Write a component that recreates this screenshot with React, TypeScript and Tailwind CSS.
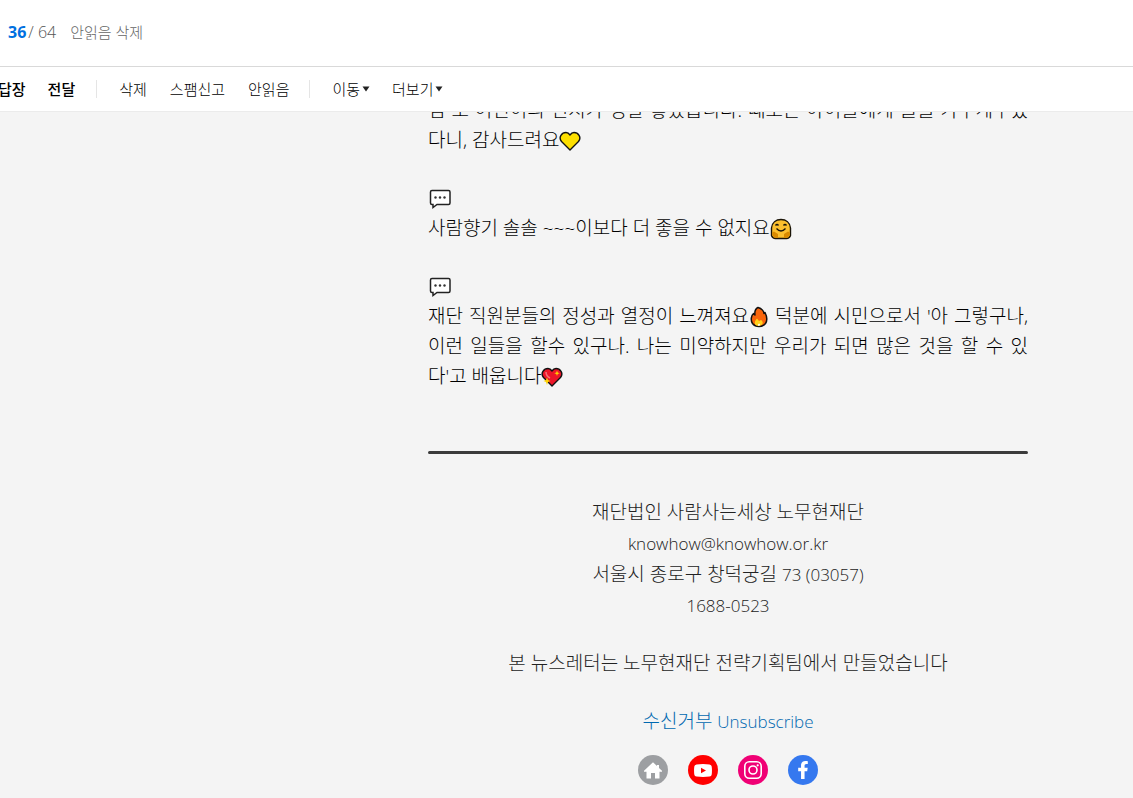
import { FaFacebookF } from "react-icons/fa";
import type { ReactNode } from "react";

function YellowHeart() {
  return (
    <svg viewBox="0 0 22 22" className="inline-block size-[22px] align-[-5px]" role="img" aria-label="노란 하트">
      <path d="M11 20 2.5 11.5C-1 7 3 2.5 7 2.500c2 0 3 1 4 2.500 1-1.500 2-2.500 4-2.500 4 0 8 4.500 4.500 9z" fill="#fddf00" stroke="#111" strokeWidth="1.400" strokeLinejoin="round" />
    </svg>
  );
}

function HugFace() {
  return (
    <svg viewBox="0 0 22 22" className="inline-block size-[22px] align-[-5px]" role="img" aria-label="포옹">
      <path d="M1.500 17.500V10C2 4.500 6 1.500 11 1.500s9 3 9.500 8.500v7.500q-1 3-4 3h-11q-3 0-4-3z" fill="#fcbf2d" stroke="#1a1408" strokeWidth="1.400" />
      <path d="M2.200 14.500 4 13.500l4 2.500v4H5l-2.800-2.500zM19.800 14.500 18 13.500 14 16v4h3l2.800-2.500z" fill="#d98a00" />
      <path d="M5.500 7.500q1.500-2 3 0M13.500 7.500q1.500-2 3 0M6.500 10.500q4.500 5 9 0" fill="none" stroke="#1a1408" strokeWidth="1.300" />
    </svg>
  );
}

function Fire() {
  return (
    <svg viewBox="0 0 20 22" className="inline-block h-[22px] w-5 align-[-5px]" role="img" aria-label="불">
      <path d="M9 1.500c4 1 6 4 6 6l1-1c2 4 2.500 8 .5 11-3 4-10 4-13 0-2-3-1.500-8 1-10l1.500 1.500C5.500 6 6 3 9 1.500z" fill="#f8650c" stroke="#111" strokeWidth="1.500" strokeLinejoin="round" />
      <path d="M8 12.500 10 15l2-1c3 2 2 5-2 6-4 0-6-3-2-7.500z" fill="#ffd21a" />
      <path d="M10 17.500q2 1 0 2.500-2-1 0-2.500z" fill="#fff" />
    </svg>
  );
}

function SparklingHeart() {
  return (
    <svg viewBox="0 0 22 22" className="inline-block size-[22px] align-[-5px]" role="img" aria-label="반짝이는 하트">
      <path d="M11 20 2.500 11.500C-1 7 3 2.500 7 2.500c2 0 3 1 4 2.500 1-1.500 2-2.500 4-2.500 4 0 8 4.500 4.500 9z" fill="#ec1528" stroke="#111" strokeWidth="1.400" strokeLinejoin="round" />
      <path d="M5 6q0 4 4 6" fill="none" stroke="#f4707a" strokeWidth="1.500" />
      <path d="m6 11.500 1 2.500 2.500 1-2.500 1-1 3-1-3-2.500-1L5 14zM16 4.500l.7 2 2 .7-2 .7-.7 2-.7-2-2-.7 2-.7z" fill="#ffd400" />
    </svg>
  );
}

function SpeechBubble() {
  return (
    <div className="flex h-7 items-center">
      <svg viewBox="0 0 22 20" className="ml-px h-5 w-[22px]" role="img" aria-label="말풍선">
        <path d="M3 1.500h16.500q1.500 0 1.500 1.500v11q0 1.500-1.500 1.500H8L4 18.500v-3H3q-1.500 0-1.500-1.500V3q0-1.500 1.500-1.500z" fill="#fff" stroke="#222" strokeWidth="1.500" />
        <circle cx="6.500" cy="8.500" r="1.200" fill="#333" />
        <circle cx="11" cy="8.500" r="1.200" fill="#333" />
        <circle cx="15.500" cy="8.500" r="1.200" fill="#333" />
      </svg>
    </div>
  );
}

function HomeIcon() {
  return (
    <svg viewBox="0 0 18 17" className="h-[17px] w-[18px]" fill="currentColor" aria-hidden="true">
      <path d="M9 .3 13 4V3h2v2.900L18 8.800v.9h-2.500v6.800H11V11H7v5.500H2.500V9.700H0v-.9z" />
    </svg>
  );
}

function YoutubeIcon() {
  return (
    <svg viewBox="0 0 18 13" className="h-[13px] w-[18px]" aria-hidden="true">
      <path d="M2.500.4Q9-.2 15.500.4q2 .2 2.200 2.100.5 4 0 8-.2 1.900-2.200 2.100-6.500.6-13 0Q.5 12.400.3 10.500q-.5-4 0-8Q.5.6 2.500.4z" fill="#fff" />
      <path d="M7 3.800v5.400l5-2.700z" fill="#f00" />
    </svg>
  );
}

function InstagramIcon() {
  return (
    <svg viewBox="0 0 18 18" className="size-[18px]" fill="none" stroke="currentColor" strokeWidth="1.600" aria-hidden="true">
      <rect x=".8" y=".8" width="16.400" height="16.400" rx="4.500" />
      <circle cx="9" cy="9" r="4" />
      <circle cx="13.700" cy="4.300" r="1.100" fill="currentColor" stroke="none" />
    </svg>
  );
}

function ToolButton({ children, bold }: { children: ReactNode; bold?: boolean }) {
  return (
    <button type="button" className={bold ? "flex items-center gap-0.5 font-medium" : "flex items-center gap-0.5"}>
      {children}
    </button>
  );
}

function Caret() {
  return (
    <svg viewBox="0 0 8 6" className="h-1.5 w-2" aria-hidden="true">
      <path d="M.5.500h7L4 5.500z" fill="#222" />
    </svg>
  );
}

const socials = [
  { label: "홈페이지", color: "bg-[#9d9fa2]", icon: <HomeIcon /> },
  { label: "유튜브", color: "bg-[#ff0000]", icon: <YoutubeIcon /> },
  { label: "인스타그램", color: "bg-[#f00075]", icon: <InstagramIcon /> },
  { label: "페이스북", color: "bg-[#3578ef]", icon: <FaFacebookF className="size-[18px]" /> },
];

export default function App() {
  return (
    <div className="flex h-screen flex-col overflow-hidden bg-[#f4f4f4] font-['Open_Sans','Noto_Sans_CJK_KR',sans-serif] font-light">
      <header className="flex h-[67px] shrink-0 items-center border-b border-[#d9d9d9] bg-white pb-0.5 pl-2 text-base text-[#555]">
        <strong className="font-bold text-[#0070e0]">36</strong>
        <span className="ml-0.5">/ 64</span>
        <button type="button" className="ml-3.5 text-[15px] text-[#666]">안읽음 삭제</button>
      </header>

      <div className="flex h-[45px] shrink-0 items-center border-b border-[#ebebeb] bg-white text-[15px] text-black" role="toolbar">
        <div className="-ml-0.5 flex gap-[22px]">
          <ToolButton bold>답장</ToolButton>
          <ToolButton bold>전달</ToolButton>
        </div>
        <div className="ml-[21px] flex gap-[23px] border-l border-[#e5e5e5] pl-[22px] leading-[18px]">
          <ToolButton>삭제</ToolButton>
          <ToolButton>스팸신고</ToolButton>
          <ToolButton>안읽음</ToolButton>
        </div>
        <div className="ml-5 flex gap-[22px] border-l border-[#e5e5e5] pl-[22px] leading-[18px]">
          <ToolButton>이동<Caret /></ToolButton>
          <ToolButton>더보기<Caret /></ToolButton>
        </div>
      </div>

      <main className="flex min-h-0 flex-1 flex-col overflow-hidden pl-[323px]">
        <article className="mx-auto -mt-[17px] w-full max-w-[600px] text-[19px] leading-[30px] text-black">
          <p className="text-justify break-all">
            님 또 어린이의 편지가 정말 좋았습니다. 때로는 아이들에게 글을 가꾸게주셨다니, 감사드려요<YellowHeart />
          </p>
          <div className="mt-[30px]">
            <SpeechBubble />
            <p>사람향기 솔솔 ~~~이보다 더 좋을 수 없지요<HugFace /></p>
          </div>
          <div className="mt-[30px]">
            <SpeechBubble />
            <p className="text-justify break-all">
              재단 직원분들의 정성과 열정이 느껴져요<Fire /> 덕분에 시민으로서 '아 그렇구나, 이런 일들을 할수 있구나. 나는 미약하지만 우리가 되면 많은 것을 할 수 있다'고 배웁니다<SparklingHeart />
            </p>
          </div>

          <hr className="mt-[60px] rounded-full border-t-3 border-[#3b3b3b]" />

          <footer className="mt-[43px] text-center text-[#222]">
            <address className="leading-[31px] not-italic">
              <p>재단법인 사람사는세상 노무현재단</p>
              <p className="text-[17px]">knowhow@knowhow.or.kr</p>
              <p>서울시 종로구 창덕궁길 <span className="text-[17px]">73 (03057)</span></p>
              <p className="text-[17px]">1688-0523</p>
            </address>
            <p className="mt-[27px]">본 뉴스레터는 노무현재단 전략기획팀에서 만들었습니다</p>
            <p className="mt-7 text-[#0068b0]">
              <a href="#unsubscribe">수신거부 <span className="text-[17px]">Unsubscribe</span></a>
            </p>
            <nav className="mt-[18px] flex justify-center gap-5" aria-label="소셜 링크">
              {socials.map((s) => (
                <a key={s.label} href="#" aria-label={s.label} className={`grid size-[30px] place-items-center rounded-full text-white ${s.color}`}>
                  {s.icon}
                </a>
              ))}
            </nav>
          </footer>
        </article>
      </main>
    </div>
  );
}
